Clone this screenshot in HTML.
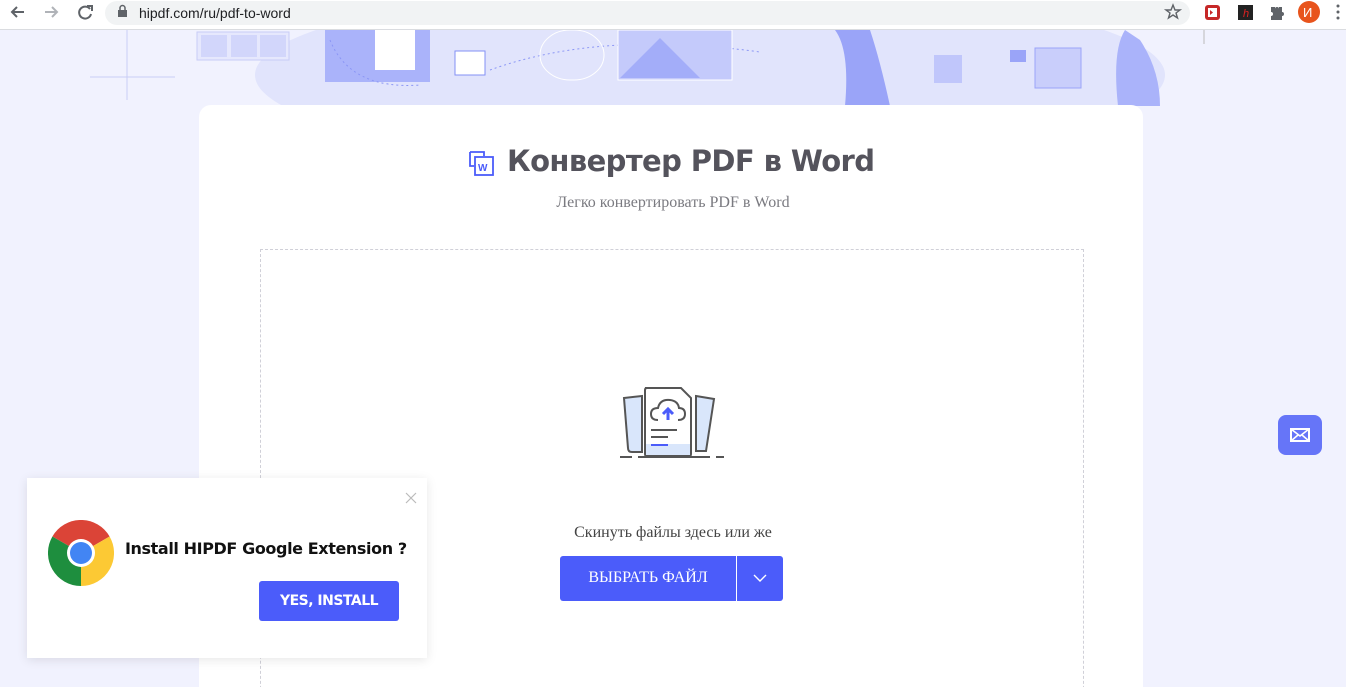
<!DOCTYPE html>
<html><head><meta charset="utf-8"><style>
*{margin:0;padding:0;box-sizing:border-box}
html,body{width:1346px;height:687px;overflow:hidden}
body{background:#f1f2fe;font-family:"Liberation Sans",sans-serif;position:relative}
.bar{position:absolute;left:0;top:0;width:1346px;height:30px;background:#fff;border-bottom:1px solid #dadce0}
.pill{position:absolute;left:105px;top:1px;width:1085px;height:24px;border-radius:12px;background:#f1f3f4}
.url{position:absolute;left:139px;top:5px;font-size:14px;color:#202124}
.card{position:absolute;left:199px;top:105px;width:944px;height:600px;background:#fff;border-radius:12px}
.drop{position:absolute;left:260px;top:249px;width:824px;height:460px;border:1px dashed #d0d0d8}
h1{position:absolute;left:507px;top:144px;white-space:nowrap;font:bold 29px "DejaVu Sans","Liberation Sans",sans-serif;color:#54535c;letter-spacing:-0.6px}
.sub{position:absolute;left:0;width:1346px;top:194px;text-align:center;font:16px "Liberation Serif",serif;color:#7a7a80}
.hint{position:absolute;left:0;width:1346px;top:524px;text-align:center;font:16px "Liberation Serif",serif;color:#444}
.btn{position:absolute;left:560px;top:556px;width:223px;height:45px;background:#4b5cfa;border-radius:3px;color:#fff}
.btn span{position:absolute;left:0;width:176px;top:13px;text-align:center;font:16px "Liberation Serif",serif}
.btn i{position:absolute;left:176px;top:0;width:1px;height:45px;background:#fff}
.pop{position:absolute;left:27px;top:478px;width:400px;height:180px;background:#fff;box-shadow:0 2px 10px rgba(0,0,0,.1)}
.pop b{position:absolute;left:98px;top:61px;white-space:nowrap;font:bold 16px "DejaVu Sans",sans-serif;color:#111;letter-spacing:-0.4px}
.ins{position:absolute;left:232px;top:103px;width:140px;height:40px;background:#4b5cfa;border-radius:3px;color:#fff;font:bold 14px "DejaVu Sans",sans-serif;text-align:center;line-height:40px;letter-spacing:-0.5px}
.mail{position:absolute;left:1278px;top:415px;width:44px;height:40px;background:#6675f8;border-radius:8px}
</style></head><body>
<svg style="position:absolute;left:0;top:30px" width="1346" height="76">
<ellipse cx="710" cy="45" rx="455" ry="90" fill="#e1e4fc"/>
<line x1="127" y1="0" x2="127" y2="70" stroke="#c9cdf5"/><line x1="90" y1="47" x2="175" y2="47" stroke="#c9cdf5"/>
<rect x="197" y="2" width="92" height="28" fill="#e6e8fd" stroke="#c8ccf6"/>
<rect x="201" y="5" width="26" height="22" fill="#d2d6fb"/><rect x="231" y="5" width="26" height="22" fill="#d2d6fb"/><rect x="260" y="5" width="26" height="22" fill="#d2d6fb"/>
<rect x="325" y="0" width="105" height="52" fill="#aab3fa"/><rect x="375" y="0" width="40" height="40" fill="#fff"/>
<rect x="455" y="21" width="30" height="24" fill="#fff" stroke="#8390f5"/>
<path d="M330 10 Q350 60 420 55 M490 40 Q600 0 760 22" stroke="#8b96f5" stroke-dasharray="2 3" fill="none"/>
<rect x="540" y="0" width="64" height="50" rx="30" fill="none" stroke="#fff"/>
<rect x="618" y="0" width="114" height="50" fill="#c4cafb" stroke="#fff"/>
<path d="M620 48 L660 8 L700 48Z" fill="#a3adf9"/>
<path d="M835 0 Q850 20 845 76 H890 Q880 30 870 0Z" fill="#9aa4f8"/>
<rect x="934" y="25" width="28" height="28" fill="#c0c6fb"/>
<rect x="1035" y="18" width="46" height="40" fill="#c9cefb" stroke="#9aa4f8"/>
<rect x="1010" y="20" width="16" height="12" fill="#9aa4f8"/>
<path d="M1118 76 Q1112 20 1125 0 L1140 10 Q1160 40 1160 76Z" fill="#aab3fa"/>
<line x1="1204" y1="0" x2="1204" y2="14" stroke="#bbb"/>
</svg>
<div class="bar"><div class="pill"></div>
<svg style="position:absolute;left:0;top:0" width="1346" height="30">
<path d="M24 12H12M17 7l-5 5 5 5" stroke="#5f6368" stroke-width="2" fill="none"/>
<path d="M45 12h12M52 7l5 5-5 5" stroke="#b0b3b8" stroke-width="2" fill="none"/>
<path d="M90 9a6 6 0 1 0 1 5" stroke="#5f6368" stroke-width="2" fill="none"/><path d="M87 6h5v5" stroke="#5f6368" stroke-width="2" fill="none"/>
<rect x="118" y="10" width="9" height="7" fill="#5f6368"/><path d="M120 10V8a2.5 2.5 0 0 1 5 0v2" stroke="#5f6368" fill="none" stroke-width="1.5"/>
<path d="M1173 5l2 5h5l-4 3 1.5 5-4.5-3-4.5 3 1.5-5-4-3h5z" stroke="#5f6368" fill="none" stroke-width="1.4"/>
<rect x="1205" y="5" width="15" height="15" rx="3" fill="#c62828"/><rect x="1208" y="8" width="9" height="9" fill="#fff"/><path d="M1210 10l3 2.5-3 2.5z" fill="#c62828"/>
<rect x="1238" y="5" width="15" height="15" fill="#222"/><text x="1243" y="17" fill="#d22" font-size="11" font-style="italic">h</text>
<path d="M1271 7h4v2a2 2 0 0 1 4 0V7h3v5a2 2 0 0 1 0 4v4h-11v-4a2 2 0 0 0 0-4z" fill="#5f6368"/>
<circle cx="1309" cy="12" r="11" fill="#e8541c"/><text x="1303" y="17" fill="#fff" font-size="13">И</text>
<circle cx="1338" cy="6" r="1.5" fill="#5f6368"/><circle cx="1338" cy="12" r="1.5" fill="#5f6368"/><circle cx="1338" cy="18" r="1.5" fill="#5f6368"/>
</svg>
<div class="url">hipdf.com/ru/pdf-to-word</div></div>
<div class="card"></div>
<div class="drop"></div>
<svg style="position:absolute;left:468px;top:150px" width="28" height="28"><path d="M2 2h14v4" stroke="#4b5cfa" stroke-width="1.8" fill="none"/><path d="M2 2v14h4" stroke="#4b5cfa" stroke-width="1.8" fill="none"/><rect x="7" y="7" width="18" height="18" stroke="#4b5cfa" stroke-width="1.8" fill="#fff"/><text x="10" y="21" font-size="10" font-weight="bold" fill="#4b5cfa">W</text></svg>
<h1>Конвертер PDF в Word</h1>
<div class="sub">Легко конвертировать PDF в Word</div>
<svg style="position:absolute;left:618px;top:382px" width="108" height="80">
<path d="M6 16l18-2 0 56-10 0Q10 70 10 66z" fill="#d9e6fb" stroke="#555" stroke-width="2"/>
<path d="M78 14l18 3-8 52-10 0z" fill="#d9e6fb" stroke="#555" stroke-width="2"/>
<path d="M27 6h36l10 10v56q0 2-2 2H29q-2 0-2-2V8q0-2 2-2z" fill="#fff" stroke="#555" stroke-width="2"/>
<path d="M28 62h44v11H28z" fill="#d9e6fb"/>
<path d="M40 38q-7 0-7-6t7-6q2-9 12-8 8 1 9 8 6 0 6 6t-7 6" fill="none" stroke="#555" stroke-width="2"/>
<path d="M50 38V28M45 32l5-5 5 5" stroke="#4b5cfa" stroke-width="3" fill="none"/>
<path d="M33 48h26M33 55h17" stroke="#555" stroke-width="2"/><path d="M33 63h17" stroke="#4b5cfa" stroke-width="2"/>
<path d="M2 75h12M20 75h72M98 75h8" stroke="#555" stroke-width="2"/>
</svg>
<div class="hint">Скинуть файлы здесь или же</div>
<div class="btn"><span>ВЫБРАТЬ ФАЙЛ</span><i></i><svg style="position:absolute;left:193px;top:18px" width="14" height="9"><path d="M1 1l6 6 6-6" stroke="#fff" stroke-width="1.4" fill="none"/></svg></div>
<div class="pop">
<svg style="position:absolute;left:378px;top:14px" width="12" height="12"><path d="M1 1l10 10M11 1L1 11" stroke="#bbb" stroke-width="1.2"/></svg>
<svg style="position:absolute;left:21px;top:42px" width="66" height="66" viewBox="-33 -33 66 66">
<path d="M0 0L-28.6 -16.5A33 33 0 0 1 28.6 -16.5Z" fill="#db4437"/>
<path d="M0 0L28.6 -16.5A33 33 0 0 1 0 33Z" fill="#fcc934"/>
<path d="M0 0L0 33A33 33 0 0 1 -28.6 -16.5Z" fill="#1e8e3e"/>
<circle r="14" fill="#fff"/><circle r="11" fill="#4285f4"/></svg>
<b>Install HIPDF Google Extension ?</b>
<div class="ins">YES, INSTALL</div></div>
<div class="mail"><svg style="position:absolute;left:12px;top:13px" width="20" height="14"><rect x="1" y="1" width="18" height="12" fill="none" stroke="#fff" stroke-width="2"/><path d="M1 1l9 7 9-7M1 13l7-6M19 13l-7-6" stroke="#fff" stroke-width="1.6" fill="none"/></svg></div>
</body></html>
